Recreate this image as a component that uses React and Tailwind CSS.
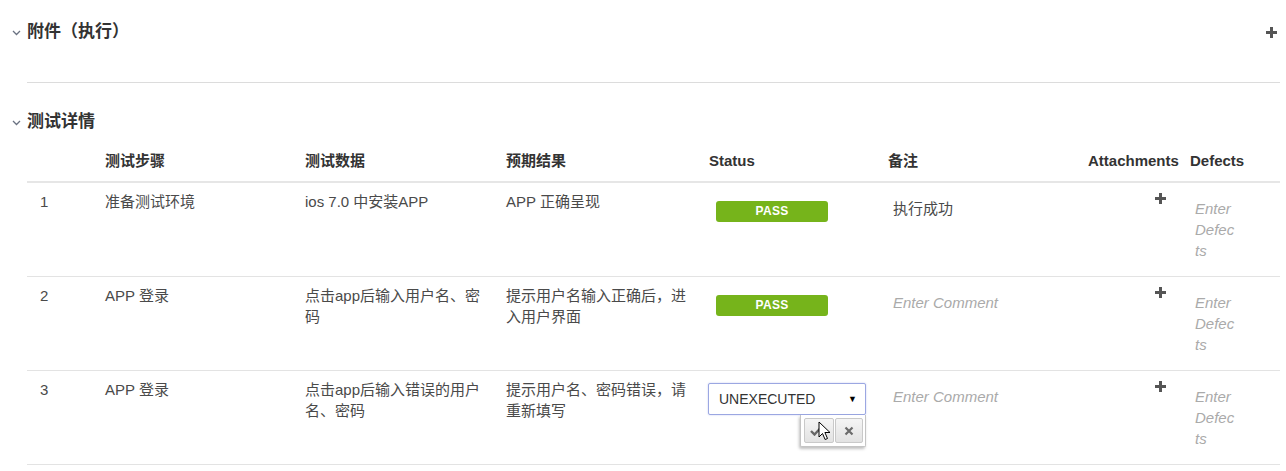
import { Fragment } from "react";

const font = { fontFamily: '"Liberation Sans", "Noto Sans CJK SC", sans-serif' };

const cols = "grid grid-cols-[70px_200px_201px_203px_179px_200px_102px_98px]";

const rows = [
  {
    no: "1",
    step: ["准备测试环境"],
    data: ["ios 7.0 中安装APP"],
    expect: ["APP 正确呈现"],
    status: "pass",
    comment: "执行成功",
  },
  {
    no: "2",
    step: ["APP 登录"],
    data: ["点击app后输入用户名、密", "码"],
    expect: ["提示用户名输入正确后，进", "入用户界面"],
    status: "pass",
    comment: null,
  },
  {
    no: "3",
    step: ["APP 登录"],
    data: ["点击app后输入错误的用户", "名、密码"],
    expect: ["提示用户名、密码错误，请", "重新填写"],
    status: "select",
    comment: null,
  },
];

function Chevron() {
  return (
    <svg width="9" height="6" viewBox="0 0 9 6" className="text-gray-500 mt-[2px]">
      <path d="M1 1l3.5 3.5L8 1" fill="none" stroke="currentColor" strokeWidth="1.3" />
    </svg>
  );
}

function Plus() {
  return (
    <svg width="11" height="11" viewBox="0 0 11 11">
      <path d="M4 0h3v4h4v3H7v4H4V7H0V4h4z" fill="#555" />
    </svg>
  );
}

function Lines({ lines }) {
  return lines.map((l, i) => (
    <Fragment key={i}>
      {l}
      {i < lines.length - 1 && <br />}
    </Fragment>
  ));
}

function StatusCell({ status }) {
  if (status === "pass") {
    return (
      <div className="pt-[18px] pl-[15px]">
        <div className="w-[112px] h-[21px] rounded-[3px] bg-[#76b41b] text-white text-[12px] font-bold tracking-wide flex items-center justify-center">
          PASS
        </div>
      </div>
    );
  }
  return (
    <div className="pt-[12px] pl-[7px] relative">
      <div className="w-[158px] h-[32px] bg-white border border-[#9ba7e2] rounded-[2px] shadow-[0_0_2px_#c4cbf0] flex items-center justify-between pl-[10px] pr-[8px] text-[14px] text-[#333]">
        <span>UNEXECUTED</span>
        <span className="text-[9px] text-black">▼</span>
      </div>
      <div className="ml-[92px] w-[66px] h-[32px] bg-white border border-[#c4c4c4] border-t-0 rounded-b-[2px] shadow-[-1px_2px_3px_rgba(0,0,0,0.25)] flex items-center gap-[1px] pl-[3px] relative">
        <div className="w-[30px] h-[25px] rounded-[2px] border border-[#c9c9c9] bg-gradient-to-b from-[#f5f5f5] to-[#e2e2e2] flex items-center justify-center">
          <svg width="12" height="10" viewBox="0 0 12 10" className="-ml-[6px]">
            <path d="M1 5l3.5 3.5L11 1.5" fill="none" stroke="#666" strokeWidth="2.4" />
          </svg>
        </div>
        <div className="w-[28px] h-[25px] rounded-[2px] border border-[#c9c9c9] bg-gradient-to-b from-[#f5f5f5] to-[#e2e2e2] flex items-center justify-center">
          <svg width="10" height="10" viewBox="0 0 10 10">
            <path d="M1.5 1.5l7 7M8.5 1.5l-7 7" fill="none" stroke="#6b6b6b" strokeWidth="2.2" />
          </svg>
        </div>
        <svg width="14" height="21" viewBox="0 0 14 21" className="absolute left-[17px] top-[6px]">
          <path d="M1 1v15l3.5-3.5 2.6 6 2.4-1-2.6-6H12z" fill="white" stroke="black" strokeWidth="1" strokeLinejoin="round" />
        </svg>
      </div>
    </div>
  );
}

export default function App() {
  return (
    <div style={font} className="w-[1286px] h-[471px] bg-white text-[#444] overflow-hidden">
      <div className="pt-[20px] pl-[12px] pr-[9px] flex items-center h-[44px] box-border">
        <div className="flex items-center h-[24px] gap-[6px]">
          <Chevron />
          <span className="text-[17px] font-bold text-[#333] leading-[24px]">附件（执行）</span>
        </div>
        <div className="ml-auto">
          <Plus />
        </div>
      </div>

      <div className="mt-[38px] ml-[27px] w-[1253px] h-px bg-[#dcdcdc]" />

      <div className="mt-[27px] pl-[12px] flex items-center h-[24px] gap-[6px]">
        <Chevron />
        <span className="text-[17px] font-bold text-[#333] leading-[24px]">测试详情</span>
      </div>

      <div className="ml-[27px] w-[1253px]">
        <div className={`${cols} h-[49px] items-end pb-[9px] border-b-2 border-[#e6e6e6] text-[15px] font-bold text-[#333] leading-[22px]`}>
          <div />
          <div className="pl-[8px]">测试步骤</div>
          <div className="pl-[8px]">测试数据</div>
          <div className="pl-[8px]">预期结果</div>
          <div className="pl-[8px]">Status</div>
          <div className="pl-[8px]">备注</div>
          <div className="pl-[8px]">Attachments</div>
          <div className="pl-[8px]">Defects</div>
        </div>

        {rows.map((r) => (
          <div key={r.no} className={`${cols} h-[94px] border-b border-[#e3e3e3] text-[15px] leading-[21px] text-[#4a4a4a]`}>
            <div className="pl-[13px] pt-[8px]">{r.no}</div>
            <div className="pl-[8px] pt-[8px]">
              <Lines lines={r.step} />
            </div>
            <div className="pl-[8px] pt-[8px]">
              <Lines lines={r.data} />
            </div>
            <div className="pl-[8px] pt-[8px]">
              <Lines lines={r.expect} />
            </div>
            <StatusCell status={r.status} />
            <div className="pl-[13px] pt-[15px]">
              {r.comment ? r.comment : <span className="italic text-[#aaa]">Enter Comment</span>}
            </div>
            <div className="flex justify-end pr-[16px] pt-[10px]">
              <div>
                <Plus />
              </div>
            </div>
            <div className="pl-[13px] pt-[15px]">
              <div className="w-[41px] break-all italic text-[#aaa]">Enter Defects</div>
            </div>
          </div>
        ))}
      </div>
    </div>
  );
}
